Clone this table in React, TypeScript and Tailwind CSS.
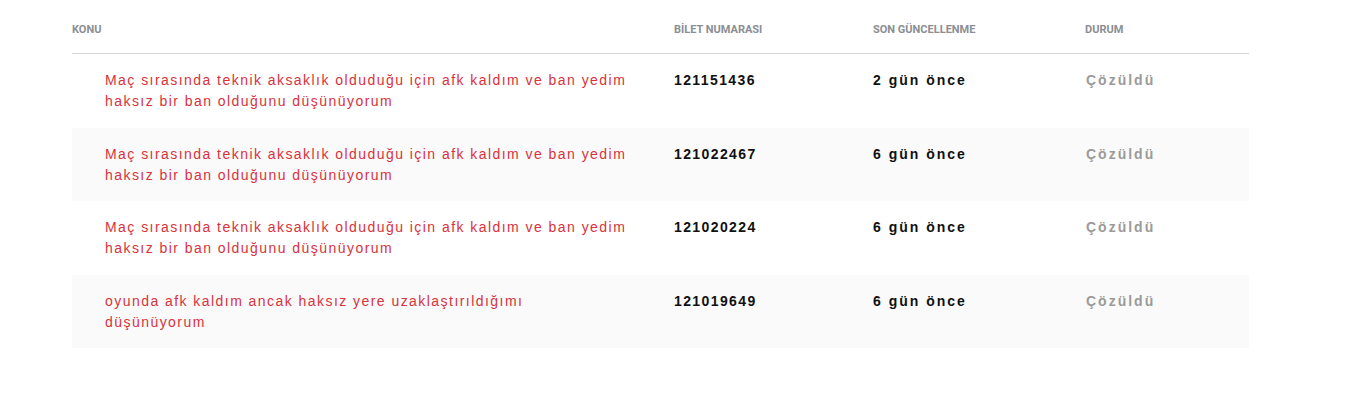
const ROWS = [
  { subject: ['Maç sırasında teknik aksaklık olduduğu için afk kaldım ve ban yedim', 'haksız bir ban olduğunu düşünüyorum'], id: '121151436', updated: '2 gün önce', status: 'Çözüldü' },
  { subject: ['Maç sırasında teknik aksaklık olduduğu için afk kaldım ve ban yedim', 'haksız bir ban olduğunu düşünüyorum'], id: '121022467', updated: '6 gün önce', status: 'Çözüldü' },
  { subject: ['Maç sırasında teknik aksaklık olduduğu için afk kaldım ve ban yedim', 'haksız bir ban olduğunu düşünüyorum'], id: '121020224', updated: '6 gün önce', status: 'Çözüldü' },
  { subject: ['oyunda afk kaldım ancak haksız yere uzaklaştırıldığımı', 'düşünüyorum'], id: '121019649', updated: '6 gün önce', status: 'Çözüldü' },
];

const COLS = 'grid grid-cols-[602px_199px_212px_1fr]';

export default function App() {
  return (
    <div className="min-h-[401px] bg-white font-['Liberation_Sans',Arial,sans-serif]">
      <div className="ml-[72px] w-[1177px]">
        <div className={`${COLS} border-b border-[#d6d6d6] pt-[23px] pb-[16px] font-['Roboto',sans-serif] text-[11px] leading-[14px] font-bold text-[#8b8e93]`}>
          <div>KONU</div>
          <div>BİLET NUMARASI</div>
          <div>SON GÜNCELLENME</div>
          <div>DURUM</div>
        </div>
        {ROWS.map((r, i) => (
          <div key={r.id} className={`${COLS} pt-[16px] pb-[15.5px] text-[14px] leading-[21px] ${i % 2 ? 'bg-[#fafafa]' : 'bg-white'}`}>
            <div className="pl-[33px] text-[#d9323c] tracking-[1.45px]">
              {r.subject.map((line) => (
                <div key={line} className="whitespace-nowrap">{line}</div>
              ))}
            </div>
            <div className="font-bold text-[#111] tracking-[1.4px]">{r.id}</div>
            <div className="font-bold text-[#111] tracking-[2px]">{r.updated}</div>
            <div className="pl-px font-bold text-[#9a9a9a] tracking-[2px]">{r.status}</div>
          </div>
        ))}
      </div>
    </div>
  );
}
